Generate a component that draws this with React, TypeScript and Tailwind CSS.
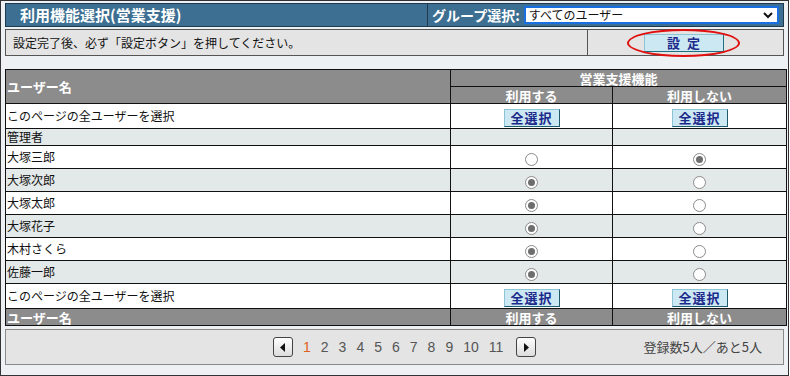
import React from 'react';

type User = { name: string; use: boolean | null; alt: boolean };

const users: User[] = [
	{ name: '管理者', use: null, alt: true },
	{ name: '大塚三郎', use: false, alt: false },
	{ name: '大塚次郎', use: true, alt: true },
	{ name: '大塚太郎', use: true, alt: false },
	{ name: '大塚花子', use: true, alt: true },
	{ name: '木村さくら', use: true, alt: false },
	{ name: '佐藤一郎', use: true, alt: true },
];

const font = { fontFamily: '"Noto Sans CJK JP", "Noto Sans", sans-serif' };

const Radio = ({ checked }: { checked: boolean }) => (
	<span className="inline-flex w-[13px] h-[13px] rounded-full border border-[#8a8a8a] bg-white items-center justify-center align-middle">
		{checked && <span className="w-[7px] h-[7px] rounded-full bg-[#6e6e6e]" />}
	</span>
);

const SelectAllButton = () => (
	<button className="w-[56px] h-[18px] bg-[#cce8f2] border border-t-[#8cc4d6] border-l-[#8cc4d6] border-b-[#1f5a6c] border-r-[#1f5a6c] text-[#1c2a8c] text-[13px] font-bold leading-none tracking-[1px]">
		全選択
	</button>
);

const HeaderRow = ({ bottom }: { bottom?: boolean }) => (
	<tr className="bg-[#8c8c8c] text-white font-bold text-[13px] leading-none">
		{bottom && <td className="h-[17px] px-[1px] border border-[#111] text-left">ユーザー名</td>}
		<td className="h-[17px] border border-[#111] text-center">利用する</td>
		<td className="h-[17px] border border-[#111] text-center">利用しない</td>
	</tr>
);

const SelectAllRow = () => (
	<tr className="bg-white">
		<td className="h-[23px] px-[1px] border border-[#111] text-[12px]">このページの全ユーザーを選択</td>
		<td className="border border-[#111] text-center">
			<SelectAllButton />
		</td>
		<td className="border border-[#111] text-center">
			<SelectAllButton />
		</td>
	</tr>
);

const Arrow = ({ dir }: { dir: 'left' | 'right' }) => (
	<button className="w-[20px] h-[20px] rounded-[3px] border border-[#444] bg-gradient-to-b from-white to-[#dcdcdc] flex items-center justify-center">
		<svg width="6" height="9" viewBox="0 0 6 9">
			{dir === 'left' ? <path d="M5 0v9L0 4.5z" fill="#111" /> : <path d="M1 0v9l5-4.5z" fill="#111" />}
		</svg>
	</button>
);

export default function App() {
	return (
		<div style={font} className="w-[789px] h-[376px] border border-[#333] bg-[#edf1f4] px-[4px] pt-[2px] text-[#111]">
			{/* title bar */}
			<div className="h-[24px] flex bg-[#3c6f91] border border-[#1e3a4e]">
				<div className="w-[422px] pl-[14px] flex items-center text-white font-bold text-[15px] border-r border-[#1e3a4e]">
					利用機能選択(営業支援)
				</div>
				<div className="flex-1 flex items-center pl-[4px] pr-[4px] gap-[4px]">
					<span className="text-white font-bold text-[14px] whitespace-nowrap">グループ選択:</span>
					<div className="flex-1 h-[18px] bg-white border-2 border-[#1a6fe0] flex items-center justify-between pl-[3px] pr-[4px] text-[12px]">
						<span>すべてのユーザー</span>
						<svg width="10" height="7" viewBox="0 0 10 7">
							<path d="M1 1l4 4 4-4" stroke="#111" strokeWidth="2" fill="none" />
						</svg>
					</div>
				</div>
			</div>

			{/* notice row */}
			<div className="mt-[2px] h-[27px] flex bg-[#e4e4e4] border border-[#555]">
				<div className="w-[582px] pl-[7px] flex items-center text-[12px] border-r border-[#555]">
					設定完了後、必ず「設定ボタン」を押してください。
				</div>
				<div className="flex-1 flex items-center justify-center pr-[4px]">
					<div className="relative">
						<button className="w-[80px] h-[18px] bg-[#cce8f2] border border-t-[#8cc4d6] border-l-[#8cc4d6] border-b-[#1f6f80] border-r-[#1f6f80] text-[#1c2a8c] text-[13px] font-bold leading-none flex items-center justify-center gap-[7px]">
							<span>設</span>
							<span>定</span>
						</button>
						<div className="absolute left-[-17px] top-[-5px] w-[113px] h-[28px] rounded-[50%] border-2 border-[#e01010]" />
					</div>
				</div>
			</div>

			{/* table */}
			<table className="mt-[13px] w-[781px] border-collapse table-fixed">
				<colgroup>
					<col className="w-[445px]" />
					<col className="w-[162px]" />
					<col className="w-[174px]" />
				</colgroup>
				<tbody>
					<tr className="bg-[#8c8c8c] text-white font-bold text-[13px] leading-none">
						<td rowSpan={2} className="px-[1px] border border-[#111] text-left">ユーザー名</td>
						<td colSpan={2} className="h-[17px] border border-[#111] text-center">営業支援機能</td>
					</tr>
					<HeaderRow />
					<SelectAllRow />
					{users.map((u) => (
						<tr key={u.name} className={u.alt ? 'bg-[#e3e8e8]' : 'bg-white'}>
							<td className={`${u.use === null ? 'h-[17px]' : 'h-[23px]'} px-[1px] border border-[#111] text-[12px] leading-none`}>{u.name}</td>
							<td className="border border-[#111] text-center leading-none">{u.use !== null && <Radio checked={u.use} />}</td>
							<td className="border border-[#111] text-center leading-none">{u.use !== null && <Radio checked={!u.use} />}</td>
						</tr>
					))}
					<SelectAllRow />
					<HeaderRow bottom />
				</tbody>
			</table>

			{/* pager */}
			<div className="mt-[3px] h-[36px] bg-[#e4e4e4] border border-[#8a8a8a] flex items-center pr-[21px]">
				<div className="ml-[267px] flex items-center">
					<Arrow dir="left" />
					<div className="flex items-center ml-[10px] mr-[13px] gap-[10px] text-[14px] text-[#555]" style={{ fontFamily: '"Liberation Sans", sans-serif' }}>
						<span className="text-[#e0601a]">1</span>
						{[2, 3, 4, 5, 6, 7, 8, 9, 10, 11].map((n) => (
							<span key={n}>{n}</span>
						))}
					</div>
					<Arrow dir="right" />
				</div>
				<div className="ml-auto text-[13px] text-[#444]">登録数5人／あと5人</div>
			</div>
		</div>
	);
}
